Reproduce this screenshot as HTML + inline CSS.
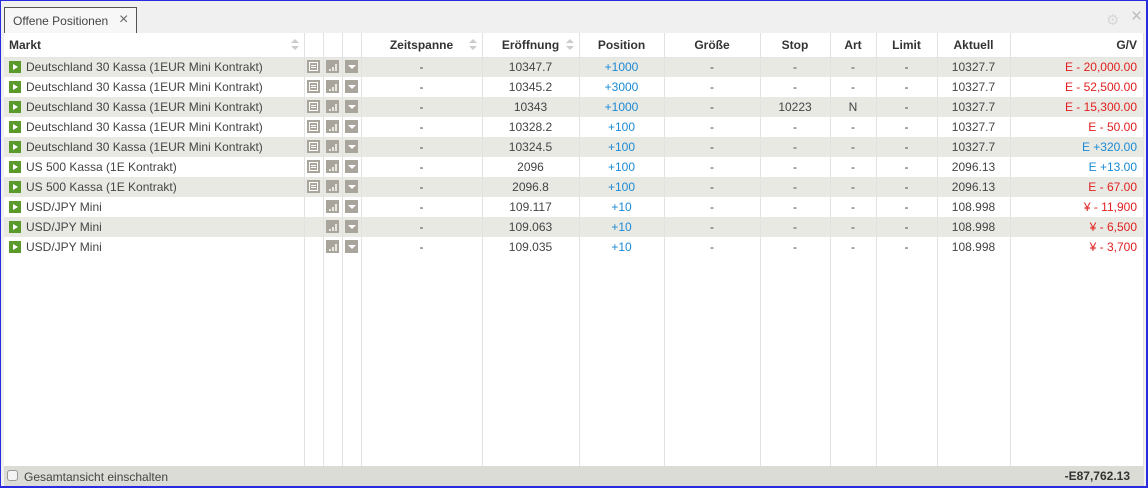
<!DOCTYPE html>
<html><head><meta charset="utf-8"><style>
*{margin:0;padding:0;box-sizing:border-box}
html,body{width:1148px;height:488px;overflow:hidden}
body{background:#f0f0f0;font-family:"Liberation Sans",Arial,sans-serif;font-size:12px;color:#444;position:relative}
.frame{position:absolute;left:0;top:0;width:1148px;height:488px;border:1px solid #2a2ae0;border-right:2px solid #2a2ae0;border-bottom:2px solid #2a2ae0}
.tab{position:absolute;left:4px;top:7px;width:133px;height:27px;background:#f7f7f7;border:1px solid #555;border-bottom:none;padding:6px 0 0 8px;font-size:12px;color:#444}
.tab .x{position:absolute;left:114px;top:3px;font-size:16px;color:#666}
.panel{position:absolute;left:4px;top:33px;width:1140px;height:433px;background:#fff}
table{border-collapse:collapse;table-layout:fixed;position:absolute;left:0;top:0}
td,th{height:20px;white-space:nowrap;overflow:hidden;text-align:center;padding:0}
th{height:24px;font-weight:bold;color:#333;font-size:12px;border-bottom:1px solid #e4e4e4}
tr.g td{background:#e9e9e4}
.l{text-align:left}
.r{text-align:right;padding-right:6px}
.b{color:#1a8ad4}.rd{color:#e02020}
.vl{position:absolute;top:0;width:1px;height:433px;background:#e2e2e2}
.pl{display:inline-block;width:12px;height:12px;background:#5a9a2a;vertical-align:-2px;margin:0 5px 0 5px;position:relative}
.pl:after{content:"";position:absolute;left:4px;top:3px;border-left:5px solid #fff;border-top:3px solid transparent;border-bottom:3px solid transparent}
.ic{display:inline-block;width:13px;height:13px;background:#a9a59d;vertical-align:-2px;position:relative}
.nw:after{content:"";position:absolute;left:2px;top:2px;width:7px;height:7px;border:1px solid #fff;background:linear-gradient(#fff,#fff) 1px 2px/5px 1px no-repeat,linear-gradient(#fff,#fff) 1px 4px/5px 1px no-repeat}
.br:after{content:"";position:absolute;left:3px;top:3px;width:8px;height:8px;background:linear-gradient(#e8e6e0,#e8e6e0) 0 6px/2px 2px no-repeat,linear-gradient(#e8e6e0,#e8e6e0) 3px 4px/2px 4px no-repeat,linear-gradient(#e8e6e0,#e8e6e0) 6px 1px/2px 7px no-repeat}
.dd:after{content:"";position:absolute;left:3px;top:5px;border-top:4px solid #fff;border-left:4px solid transparent;border-right:4px solid transparent}
.sort{position:absolute;width:8px;height:12px}
.sort:before{content:"";position:absolute;top:0;border-bottom:4px solid #ccc;border-left:4px solid transparent;border-right:4px solid transparent}
.sort:after{content:"";position:absolute;top:7px;border-top:4px solid #ccc;border-left:4px solid transparent;border-right:4px solid transparent}
.foot{position:absolute;left:4px;top:466px;width:1140px;height:20px;background:#dcdcd6;font-size:12px;color:#444}
.cb{position:absolute;left:3px;top:4px;width:11px;height:11px;border:1px solid #999;border-radius:3px;background:#f4f4f4}
</style></head><body>
<div class="tab">Offene Positionen<span class="x">×</span></div>
<div style="position:absolute;left:1106px;top:11px;font-size:15px;color:#d8d8d8">⚙</div>
<div style="position:absolute;left:1131px;top:6px;font-size:19px;color:#bbb">×</div>
<div class="panel">
<table>
<colgroup><col style="width:300px"><col style="width:19px"><col style="width:19px"><col style="width:19px"><col style="width:121px"><col style="width:97px"><col style="width:85px"><col style="width:96px"><col style="width:70px"><col style="width:46px"><col style="width:61px"><col style="width:73px"><col style="width:133px"></colgroup>
<tr><th class="l" style="padding-left:5px">Markt</th><th></th><th></th><th></th><th>Zeitspanne</th><th>Eröffnung</th><th>Position</th><th>Größe</th><th>Stop</th><th>Art</th><th>Limit</th><th>Aktuell</th><th class="r">G/V</th></tr>
<tr class="g"><td class="l"><span class="pl"></span>Deutschland 30 Kassa (1EUR Mini Kontrakt)</td><td><span class="ic nw"></span></td><td><span class="ic br"></span></td><td><span class="ic dd"></span></td><td>-</td><td>10347.7</td><td class="b">+1000</td><td>-</td><td>-</td><td>-</td><td>-</td><td>10327.7</td><td class="r rd">E - 20,000.00</td></tr>
<tr><td class="l"><span class="pl"></span>Deutschland 30 Kassa (1EUR Mini Kontrakt)</td><td><span class="ic nw"></span></td><td><span class="ic br"></span></td><td><span class="ic dd"></span></td><td>-</td><td>10345.2</td><td class="b">+3000</td><td>-</td><td>-</td><td>-</td><td>-</td><td>10327.7</td><td class="r rd">E - 52,500.00</td></tr>
<tr class="g"><td class="l"><span class="pl"></span>Deutschland 30 Kassa (1EUR Mini Kontrakt)</td><td><span class="ic nw"></span></td><td><span class="ic br"></span></td><td><span class="ic dd"></span></td><td>-</td><td>10343</td><td class="b">+1000</td><td>-</td><td>10223</td><td>N</td><td>-</td><td>10327.7</td><td class="r rd">E - 15,300.00</td></tr>
<tr><td class="l"><span class="pl"></span>Deutschland 30 Kassa (1EUR Mini Kontrakt)</td><td><span class="ic nw"></span></td><td><span class="ic br"></span></td><td><span class="ic dd"></span></td><td>-</td><td>10328.2</td><td class="b">+100</td><td>-</td><td>-</td><td>-</td><td>-</td><td>10327.7</td><td class="r rd">E - 50.00</td></tr>
<tr class="g"><td class="l"><span class="pl"></span>Deutschland 30 Kassa (1EUR Mini Kontrakt)</td><td><span class="ic nw"></span></td><td><span class="ic br"></span></td><td><span class="ic dd"></span></td><td>-</td><td>10324.5</td><td class="b">+100</td><td>-</td><td>-</td><td>-</td><td>-</td><td>10327.7</td><td class="r b">E +320.00</td></tr>
<tr><td class="l"><span class="pl"></span>US 500 Kassa (1E Kontrakt)</td><td><span class="ic nw"></span></td><td><span class="ic br"></span></td><td><span class="ic dd"></span></td><td>-</td><td>2096</td><td class="b">+100</td><td>-</td><td>-</td><td>-</td><td>-</td><td>2096.13</td><td class="r b">E +13.00</td></tr>
<tr class="g"><td class="l"><span class="pl"></span>US 500 Kassa (1E Kontrakt)</td><td><span class="ic nw"></span></td><td><span class="ic br"></span></td><td><span class="ic dd"></span></td><td>-</td><td>2096.8</td><td class="b">+100</td><td>-</td><td>-</td><td>-</td><td>-</td><td>2096.13</td><td class="r rd">E - 67.00</td></tr>
<tr><td class="l"><span class="pl"></span>USD/JPY Mini</td><td></td><td><span class="ic br"></span></td><td><span class="ic dd"></span></td><td>-</td><td>109.117</td><td class="b">+10</td><td>-</td><td>-</td><td>-</td><td>-</td><td>108.998</td><td class="r rd">¥ - 11,900</td></tr>
<tr class="g"><td class="l"><span class="pl"></span>USD/JPY Mini</td><td></td><td><span class="ic br"></span></td><td><span class="ic dd"></span></td><td>-</td><td>109.063</td><td class="b">+10</td><td>-</td><td>-</td><td>-</td><td>-</td><td>108.998</td><td class="r rd">¥ - 6,500</td></tr>
<tr><td class="l"><span class="pl"></span>USD/JPY Mini</td><td></td><td><span class="ic br"></span></td><td><span class="ic dd"></span></td><td>-</td><td>109.035</td><td class="b">+10</td><td>-</td><td>-</td><td>-</td><td>-</td><td>108.998</td><td class="r rd">¥ - 3,700</td></tr>
</table>
<div class="vl" style="left:300px"></div><div class="vl" style="left:319px"></div><div class="vl" style="left:338px"></div><div class="vl" style="left:357px"></div><div class="vl" style="left:478px"></div><div class="vl" style="left:575px"></div><div class="vl" style="left:660px"></div><div class="vl" style="left:756px"></div><div class="vl" style="left:826px"></div><div class="vl" style="left:872px"></div><div class="vl" style="left:933px"></div><div class="vl" style="left:1006px"></div><div class="vl" style="left:1139px"></div>
<span class="sort" style="left:287px;top:6px"></span><span class="sort" style="left:465px;top:6px"></span><span class="sort" style="left:562px;top:6px"></span>
</div>
<div class="foot"><span class="cb"></span><span style="position:absolute;left:20px;top:4px">Gesamtansicht einschalten</span><span style="position:absolute;right:14px;top:3px;font-weight:bold;color:#333">-E87,762.13</span></div>
<div class="frame"></div>
</body></html>
